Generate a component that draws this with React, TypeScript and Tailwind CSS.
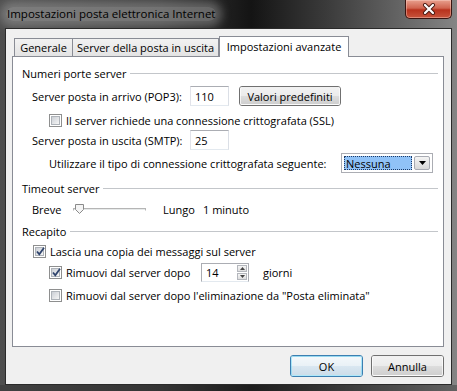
import React from 'react';

function CheckBox({ checked }: { checked?: boolean }) {
  return (
    <span className="w-[13px] h-[13px] shrink-0 border border-[#8e8f8f] bg-white p-px flex relative">
      <span className="flex-1 border border-[#aeb3b9] bg-gradient-to-br from-[#cbcfd5] to-[#f6f6f6]" />
      {checked && (
        <svg className="absolute left-[1px] top-[0px]" width="11" height="11" viewBox="0 0 11 11">
          <path d="M2 5.5 L4.3 8.3 L9 1.8" fill="none" stroke="#2f446d" strokeWidth="1.8" />
        </svg>
      )}
    </span>
  );
}

function TextBox({ value, w }: { value: string; w: string }) {
  return (
    <div className={`${w} h-[20px] border border-[#abadb3] border-l-[#e2e3ea] border-r-[#dbdfe6] border-b-[#e3e9ef] bg-white flex items-center pl-[4px]`}>
      {value}
    </div>
  );
}

function GroupHeader({ label, mt }: { label: string; mt: string }) {
  return (
    <div className={`${mt} h-[20px] flex items-center gap-[4px] pl-[9px] pr-[5px]`}>
      <span>{label}</span>
      <span className="flex-1 h-px bg-[#c3c6ca]" />
    </div>
  );
}

function WinButton({ label, focused }: { label: string; focused?: boolean }) {
  return (
    <div
      className={`w-[73px] h-[22px] rounded-[3px] border flex ${
        focused ? 'border-[#3c7fb1]' : 'border-[#707070]'
      }`}
    >
      <div
        className={`flex-1 rounded-[2px] border flex items-center justify-center ${
          focused
            ? 'border-[#48d2fb]/40 bg-[linear-gradient(to_bottom,#f3f8fb_0%,#e9f1f6_50%,#d9e7f1_51%,#cddde9_100%)]'
            : 'border-white/70 bg-[linear-gradient(to_bottom,#f2f2f2_0%,#ebebeb_50%,#dddddd_51%,#cfcfcf_100%)]'
        }`}
      >
        {label}
      </div>
    </div>
  );
}

export default function App() {
  return (
    <div className="w-[457px] h-[391px] flex flex-col overflow-hidden whitespace-nowrap bg-[linear-gradient(to_right,#4e4e4e_0%,#3a3a3a_35%,#141414_55%,#3c3c3c_72%,#858585_100%)] font-['Open_Sans',sans-serif] text-[11px] leading-none text-black">
      {/* title bar */}
      <div className="h-[28px] shrink-0 flex items-start">
        <div className="ml-[6px] mt-[7px] px-[1px] py-[1px] rounded-[8px] bg-[rgba(185,185,185,0.45)] shadow-[0_0_10px_6px_rgba(185,185,185,0.4)] text-[11.5px]">
          Impostazioni posta elettronica Internet
        </div>
        <div className="ml-auto mr-[5px] w-[47px] h-[19px] rounded-b-[5px] border border-t-0 border-[#3a1410] bg-[linear-gradient(to_bottom,#e8a08e_0%,#d0644f_45%,#b8321d_55%,#c8543c_100%)] flex items-center justify-center shadow-[inset_0_0_0_1px_rgba(255,220,210,0.4)]">
          <svg width="14" height="12" viewBox="0 0 14 12">
            <path d="M3 2 L11 10 M11 2 L3 10" stroke="#4a1a12" strokeWidth="4" strokeLinecap="round" />
            <path d="M3 2 L11 10 M11 2 L3 10" stroke="#ffffff" strokeWidth="2.2" strokeLinecap="round" />
          </svg>
        </div>
      </div>

      {/* client area */}
      <div className="mx-[5px] h-[357px] shrink-0 border border-[#2a2a2a] bg-[#f0f0f0] flex flex-col">
        {/* tabs */}
        <div className="h-[27px] shrink-0 flex items-end pl-[8px]">
          <div className="w-[59px] h-[18px] border border-b-0 border-[#898c95] bg-gradient-to-b from-[#f2f2f2] to-[#e3e3e3] flex items-center justify-center">
            Generale
          </div>
          <div className="w-[146px] h-[18px] border border-b-0 border-l-0 border-[#898c95] bg-gradient-to-b from-[#f2f2f2] to-[#e3e3e3] flex items-center justify-center">
            Server della posta in uscita
          </div>
          <div className="relative z-10 w-[130px] h-[21px] -mb-px border border-b-0 border-[#898c95] bg-white flex items-center justify-center pb-[2px]">
            Impostazioni avanzate
          </div>
        </div>

        {/* panel */}
        <div className="ml-[6px] w-[432px] h-[291px] shrink-0 border border-[#898c95] bg-white flex flex-col">
          <GroupHeader label="Numeri porte server" mt="mt-[6px]" />

          <div className="mt-[3px] h-[20px] flex items-center pl-[19px]">
            <span className="w-[158px]">Server posta in arrivo (POP3):</span>
            <TextBox value="110" w="w-[39px]" />
            <div className="ml-[10px] w-[102px] h-[20px] rounded-[3px] border border-[#707070] flex">
              <div className="flex-1 rounded-[2px] border border-white/70 bg-[linear-gradient(to_bottom,#f2f2f2_0%,#ebebeb_50%,#dddddd_51%,#cfcfcf_100%)] flex items-center justify-center">
                Valori predefiniti
              </div>
            </div>
          </div>

          <div className="mt-[4px] h-[20px] flex items-center gap-[4px] pl-[36px]">
            <CheckBox />
            <span>Il server richiede una connessione crittografata (SSL)</span>
          </div>

          <div className="h-[20px] flex items-center pl-[19px]">
            <span className="w-[158px]">Server posta in uscita (SMTP):</span>
            <TextBox value="25" w="w-[39px]" />
          </div>

          <div className="mt-[3px] h-[20px] flex items-center pl-[36px]">
            <span className="w-[292px]">Utilizzare il tipo di connessione crittografata seguente:</span>
            <div className="w-[92px] h-[20px] border border-[#abadb3] bg-white flex p-[2px] gap-[2px]">
              <div className="flex-1 bg-[#90c2f7] border border-dotted border-[#1c3a66] flex items-center pl-[1px]">
                Nessuna
              </div>
              <div className="w-[16px] border border-[#a8abb3] rounded-[2px] bg-gradient-to-b from-[#f4f4f4] to-[#d8d8d8] flex items-center justify-center">
                <svg width="7" height="4" viewBox="0 0 7 4">
                  <path d="M0 0 H7 L3.5 4 Z" fill="#000" />
                </svg>
              </div>
            </div>
          </div>

          <GroupHeader label="Timeout server" mt="mt-[5px]" />

          <div className="mt-[1px] h-[20px] flex items-center pl-[19px]">
            <span className="w-[41px]">Breve</span>
            <div className="w-[73px] h-[20px] flex items-center relative">
              <div className="w-full h-[3px] border border-[#b5b5b5] border-b-white bg-[#e7eaea]" />
              <svg className="absolute left-[2px] top-[5px]" width="9" height="10" viewBox="0 0 9 10">
                <path d="M0.5 0.5 H8.5 V5.5 L4.5 9.5 L0.5 5.5 Z" fill="#f4f4f4" stroke="#8a8a8a" />
              </svg>
            </div>
            <span className="ml-[17px] w-[40px]">Lungo</span>
            <span>1 minuto</span>
          </div>

          <GroupHeader label="Recapito" mt="mt-[2px]" />

          <div className="h-[20px] flex items-center gap-[4px] pl-[20px]">
            <CheckBox checked />
            <span>Lascia una copia dei messaggi sul server</span>
          </div>

          <div className="mt-[1px] h-[20px] flex items-center pl-[36px]">
            <CheckBox checked />
            <span className="ml-[4px] w-[135px]">Rimuovi dal server dopo</span>
            <div className="w-[48px] h-[19px] border border-[#abadb3] border-b-[#e3e9ef] bg-white flex">
              <span className="flex-1 flex items-center pl-[4px] pt-[1px]">14</span>
              <div className="w-[12px] flex flex-col gap-px p-px">
                <div className="flex-1 border border-[#b4b7bd] bg-gradient-to-b from-[#f5f5f5] to-[#dedede] flex items-center justify-center">
                  <svg width="5" height="3" viewBox="0 0 5 3">
                    <path d="M0 3 H5 L2.5 0 Z" fill="#444" />
                  </svg>
                </div>
                <div className="flex-1 border border-[#b4b7bd] bg-gradient-to-b from-[#f5f5f5] to-[#dedede] flex items-center justify-center">
                  <svg width="5" height="3" viewBox="0 0 5 3">
                    <path d="M0 0 H5 L2.5 3 Z" fill="#444" />
                  </svg>
                </div>
              </div>
            </div>
            <span className="ml-[14px]">giorni</span>
          </div>

          <div className="mt-[3px] h-[20px] flex items-center gap-[4px] pl-[36px]">
            <CheckBox />
            <span>Rimuovi dal server dopo l'eliminazione da "Posta eliminata"</span>
          </div>
        </div>

        {/* buttons */}
        <div className="ml-[6px] w-[432px] mt-[8px] flex justify-end gap-[8px]">
          <WinButton label="OK" focused />
          <WinButton label="Annulla" />
        </div>
      </div>
      <div className="flex-1 bg-[#2e2e2e]/40" />
    </div>
  );
}
